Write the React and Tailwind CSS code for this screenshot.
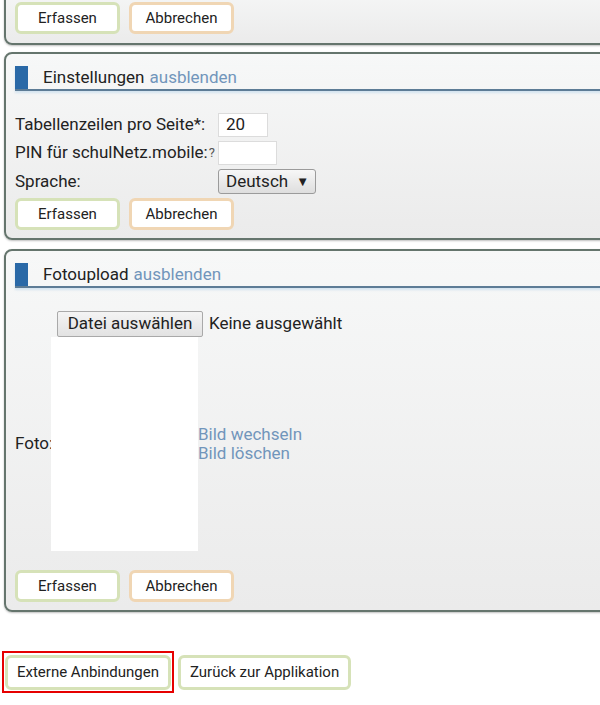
import React from "react";

function Btn({ children, tone = "green", className = "" }) {
  const tones = {
    green: "border-[#d6e2b8]",
    orange: "border-[#f0d6b4]",
  };
  return (
    <button
      className={`h-[32px] min-w-[105px] rounded-[6px] border-[3px] bg-white px-[10px] text-[15px] text-[#222] ${tones[tone]} ${className}`}
    >
      {children}
    </button>
  );
}

function Actions() {
  return (
    <div className="flex gap-[9px] pl-[9px]">
      <Btn tone="green">Erfassen</Btn>
      <Btn tone="orange">Abbrechen</Btn>
    </div>
  );
}

function Panel({ title, children, className = "" }) {
  return (
    <section
      className={`ml-[4px] mr-[-20px] rounded-l-[8px] border-2 border-[#65756d] bg-linear-to-b from-[#f7f8f8] to-[#ebebeb] shadow-[0_1px_2px_rgba(0,0,0,0.25)] ${className}`}
    >
      {title && (
        <div className="mx-[9px] mt-[12px] flex h-[25px] items-start border-b-2 border-[#5d7c96] shadow-[0_2px_2px_rgba(190,215,235,0.6)]">
          <div className="h-[23px] w-[13px] bg-[#2a69a7]" />
          <div className="ml-[15px] flex h-[23px] items-center text-[17px] text-[#222]">
            {title}
            <a className="ml-[5px] text-[#7195bb]">ausblenden</a>
          </div>
        </div>
      )}
      {children}
    </section>
  );
}

export default function App() {
  return (
    <div className="min-h-[705px] overflow-hidden bg-white font-['Roboto','Liberation_Sans',sans-serif] text-[17px] text-[#222]">
      {/* previous panel, cut off at top */}
      <Panel className="-mt-[20px] pt-[20px] pb-[9px]">
        <Actions />
      </Panel>

      {/* Einstellungen */}
      <Panel title="Einstellungen" className="mt-[7px] pb-[8px]">
        <div className="grid grid-cols-[203px_auto] gap-y-[4px] pl-[9px] pt-[22px]">
          <div className="flex h-[24px] items-center">Tabellenzeilen pro Seite*:</div>
          <div>
            <div className="flex h-[24px] w-[50px] items-center border border-[#dcdcdc] bg-white pl-[7px]">20</div>
          </div>
          <div className="flex h-[24px] items-center">
            PIN für schulNetz.mobile:<span className="ml-[1px] text-[13px] text-[#555]">?</span>
          </div>
          <div>
            <div className="h-[24px] w-[59px] border border-[#dcdcdc] bg-white" />
          </div>
          <div className="flex h-[25px] items-end">Sprache:</div>
          <div>
            <div className="flex h-[25px] w-[98px] items-center justify-between rounded-[3px] border border-[#9b9b9b] bg-linear-to-b from-[#f7f7f7] to-[#dedede] pl-[7px] pr-[6px]">
              <span>Deutsch</span>
              <span className="text-[13px]">▼</span>
            </div>
          </div>
        </div>
        <div className="mt-[4px]">
          <Actions />
        </div>
      </Panel>

      {/* Fotoupload */}
      <Panel title="Fotoupload" className="mt-[9px] pb-[8px]">
        <div className="pl-[9px] pt-[23px]">
          <div className="flex items-center pl-[42px]">
            <div className="flex h-[26px] w-[146px] items-center justify-center rounded-[2px] border border-[#a9a9a9] bg-linear-to-b from-[#f4f4f4] to-[#e2e2e2]">
              Datei auswählen
            </div>
            <span className="ml-[6px]">Keine ausgewählt</span>
          </div>
          <div className="flex items-center">
            <div className="w-[36px] shrink-0 whitespace-nowrap">Foto:</div>
            <div className="relative h-[214px] w-[147px] shrink-0 bg-white" />
            <div className="flex flex-col leading-[19px] text-[#7195bb]">
              <a>Bild wechseln</a>
              <a>Bild löschen</a>
            </div>
          </div>
        </div>
        <div className="mt-[19px]">
          <Actions />
        </div>
      </Panel>

      {/* bottom navigation */}
      <div className="mt-[39px] flex items-start pl-[2px]">
        <div className="border-2 border-[#e60000] px-[1px] pt-[2px] pb-[1px]">
          <button className="h-[35px] rounded-[6px] border-[3px] border-[#d6e2b8] bg-white px-[9px] text-[15px] text-[#222]">
            Externe Anbindungen
          </button>
        </div>
        <button className="ml-[4px] mt-[4px] h-[35px] rounded-[6px] border-[3px] border-[#d6e2b8] bg-white px-[9px] text-[15px] text-[#222]">
          Zurück zur Applikation
        </button>
      </div>
    </div>
  );
}
